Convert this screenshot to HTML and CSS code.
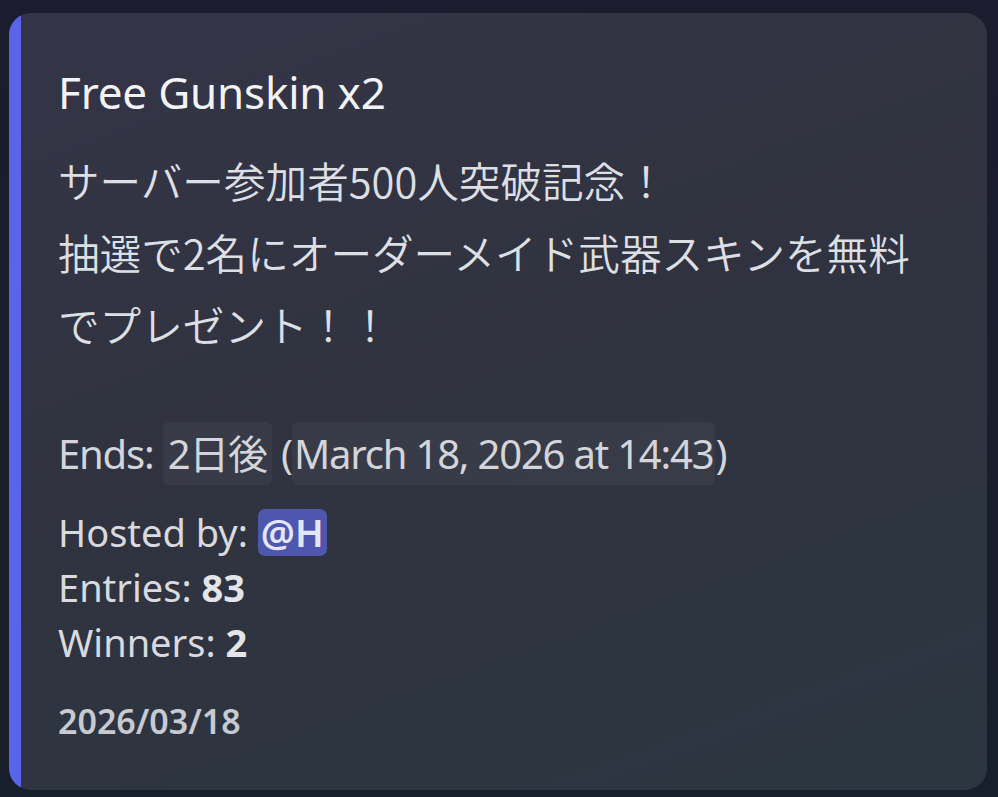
FILE: index.html
```html
<!DOCTYPE html>
<html lang="ja">
<head>
<meta charset="utf-8">
<title>Giveaway</title>
<link rel="stylesheet" href="styles.css">
</head>
<body>
<div class="embed">
  <div class="bar"></div>
  <div class="content">
    <div class="title">Free Gunskin x2</div>
    <div class="desc">
      <div class="dline">サーバー参加者500人突破記念！</div>
      <div class="dline">抽選で2名にオーダーメイド武器スキンを無料</div>
      <div class="dline">でプレゼント！！</div>
    </div>
    <div class="ends">Ends: <span class="chip chip-rel">2日後</span> (<span class="chip chip-abs">March 18, 2026 at 14:43</span>)</div>
    <div class="fields">
      <div class="row">Hosted by: <span class="mention">@H</span></div>
      <div class="row">Entries: <b>83</b></div>
      <div class="row">Winners: <b>2</b></div>
    </div>
    <div class="footer">2026/03/18</div>
  </div>
</div>
</body>
</html>
```

FILE: styles.css
```css
html, body {
  margin: 0;
  height: 100%;
}
body {
  background: linear-gradient(180deg, #1b1c2e 0%, #181f2c 100%);
  padding: 13px 11px 7px 9px;
  box-sizing: border-box;
  font-family: "Noto Sans", "Noto Sans CJK JP", sans-serif;
  color: #dbdee1;
}
.embed {
  display: flex;
  height: 777px;
  border-radius: 22px;
  overflow: hidden;
  background: linear-gradient(160deg, #343447 0%, #30333f 45%, #2b3641 100%);
}
.bar {
  width: 12px;
  flex: none;
  background: #5a64ea;
}
.content {
  flex: 1;
  padding: 54px 36px 0 37px;
  display: flex;
  flex-direction: column;
}
.title {
  font-size: 44px;
  font-weight: 400;
  line-height: 50px;
  color: #f2f3f5;
  letter-spacing: -0.2px;
}
.desc {
  margin-top: 27px;
  font-family: "Noto Sans CJK JP", sans-serif;
  font-weight: 350;
  font-size: 41.6px;
  line-height: 72px;
  color: #dcdfe3;
}
.ends {
  margin-top: 62px;
  font-size: 40px;
  line-height: 63px;
  color: #d3d5da;
  letter-spacing: -1.2px;
}
.chip {
  display: inline-block;
  height: 63px;
  line-height: 63px;
  vertical-align: top;
  background: rgba(255, 255, 255, 0.045);
  border-radius: 6px;
  padding: 0 5px;
}
.chip-abs {
  padding: 0 2px;
}
.fields {
  margin-top: 20px;
  font-size: 38px;
  line-height: 55px;
  color: #d8dadf;
}
.row b {
  font-weight: 700;
  color: #e3e5e8;
}
.mention {
  display: inline-block;
  background: #4e57ad;
  color: #e3e6fd;
  font-weight: 600;
  border-radius: 7px;
  padding: 0 3px;
  line-height: 47px;
}
.footer {
  margin-top: 31px;
  font-size: 34px;
  font-weight: 600;
  line-height: 40px;
  color: #c7cad1;
}
```
